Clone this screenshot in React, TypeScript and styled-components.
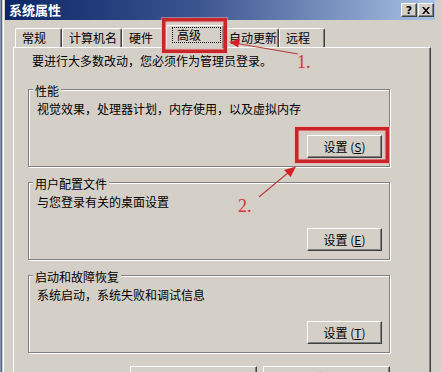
import React from "react";
import styled, { createGlobalStyle } from "styled-components";

const FONT = `"Noto Sans CJK SC", "Noto Sans", "DejaVu Sans", sans-serif`;
const FACE = "#d4d0c8";

const Global = createGlobalStyle`
  html, body { margin: 0; padding: 0; background: ${FACE}; }
  body { font-family: ${FONT}; font-size: 12px; color: #000; }
`;

const Window = styled.div`
  position: relative;
  width: 441px;
  height: 372px;
  overflow: hidden;
  box-sizing: border-box;
  background: ${FACE};
  padding: 0 6px 0 5px;
  display: flex;
  flex-direction: column;
  box-shadow: inset 1px 0 #8393b3, inset 2px 0 #52627f, inset 3px 0 ${FACE},
    inset 4px 0 #ffffff;
`;

const TitleBar = styled.div`
  height: 20px;
  flex: none;
  display: flex;
  align-items: center;
  padding: 0 1px 0 4px;
  box-sizing: border-box;
  background: linear-gradient(to right, #0c2668 0%, #3b5590 45%, #a9c2e4 100%);
`;

const TitleText = styled.span`
  flex: 1;
  color: #fff;
  font-family: ${FONT};
  font-weight: 700;
  font-size: 13px;
  line-height: 16px;
`;

const TitleButtons = styled.div`
  display: flex;
  gap: 1px;
`;

const CaptionButton = styled.div`
  width: 16px;
  height: 14px;
  box-sizing: border-box;
  background: ${FACE};
  border-top: 1px solid #fff;
  border-left: 1px solid #fff;
  border-right: 1px solid #404040;
  border-bottom: 1px solid #404040;
  box-shadow: inset -1px -1px #808080;
  display: flex;
  align-items: center;
  justify-content: center;
  font-family: "DejaVu Sans", sans-serif;
  font-weight: 700;
  font-size: 11px;
  line-height: 11px;
  color: #000;
`;

const Content = styled.div`
  flex: 1;
  display: flex;
  flex-direction: column;
  padding: 5px 4px 0 8px;
  min-height: 0;
`;

const TabStrip = styled.div`
  height: 23px;
  flex: none;
  display: flex;
  align-items: flex-end;
  padding-left: 2px;
  margin-bottom: -1px;
  position: relative;
  z-index: 1;
`;

const Tab = styled.div<{ $w: number; $active?: boolean }>`
  width: ${(p) => p.$w}px;
  height: ${(p) => (p.$active ? 23 : 19)}px;
  margin: ${(p) => (p.$active ? "0 -2px 0 -2px" : "0 0 1px 0")};
  position: relative;
  z-index: ${(p) => (p.$active ? 2 : 1)};
  box-sizing: border-box;
  background: ${FACE};
  border-top: 1px solid #fff;
  border-left: 1px solid #fff;
  border-right: 1px solid #404040;
  border-radius: 2px 2px 0 0;
  box-shadow: inset -1px 0 #808080;
  padding: ${(p) => (p.$active ? "1px 2px 0 5px" : "2px 0 0 6px")};
  font-size: 12px;
  line-height: 14px;
  white-space: nowrap;
`;

const FocusRect = styled.span`
  display: block;
  height: 16px;
  box-sizing: border-box;
  border: 1px dotted #000;
  padding: 0 0 0 4px;
  line-height: 14px;
`;

const Panel = styled.div`
  flex: 1;
  box-sizing: border-box;
  border-top: 1px solid #fff;
  border-left: 1px solid #fff;
  border-right: 1px solid #404040;
  border-bottom: 1px solid #404040;
  box-shadow: inset -1px -1px #808080;
  padding: 6px 0 0 14px;
  display: flex;
  flex-direction: column;
  gap: 15px;
`;

const Notice = styled.p`
  margin: 0 0 6px 4px;
  font-size: 12px;
  line-height: 14px;
`;

const Group = styled.div`
  position: relative;
  width: 362px;
  height: 78px;
  flex: none;
  box-sizing: border-box;
  border: 1px solid #808080;
  box-shadow: inset 1px 1px #fff, 1px 1px #fff;
  padding: 12px 7px 8px 8px;
  display: flex;
  flex-direction: column;
`;

const GroupTitle = styled.span`
  position: absolute;
  top: -6px;
  left: 4px;
  padding: 0 2px;
  background: ${FACE};
  font-size: 12px;
  line-height: 14px;
`;

const GroupText = styled.div`
  font-size: 12px;
  line-height: 14px;
`;

const Button = styled.div<{ $w?: number }>`
  width: ${(p) => p.$w ?? 75}px;
  height: 23px;
  box-sizing: border-box;
  background: ${FACE};
  border-top: 1px solid #fff;
  border-left: 1px solid #fff;
  border-right: 1px solid #404040;
  border-bottom: 1px solid #404040;
  box-shadow: inset -1px -1px #808080;
  display: flex;
  align-items: center;
  justify-content: center;
  font-size: 12px;
  line-height: 14px;
  white-space: nowrap;
`;

const GroupButton = styled(Button)`
  margin-top: auto;
  align-self: flex-end;
`;

const BottomRow = styled.div`
  width: 362px;
  display: flex;
  justify-content: flex-end;
  gap: 6px;
  margin-top: -2px;
`;

const Overlay = styled.div`
  position: absolute;
  inset: 0;
  pointer-events: none;
  z-index: 10;
`;

const Mark = styled.span<{ $x: number; $y: number }>`
  position: absolute;
  left: ${(p) => p.$x}px;
  top: ${(p) => p.$y}px;
  font-family: "Liberation Serif", serif;
  font-size: 18px;
  line-height: 18px;
  color: #c93a3a;
  text-shadow: 0 0 2px #f7b5b5;
`;

const Key = ({ k }: { k: string }) => (
  <>
    {" "}(<u>{k}</u>)
  </>
);

const tabs = [
  { label: "常规", w: 47 },
  { label: "计算机名", w: 60 },
  { label: "硬件", w: 46 },
  { label: "高级", w: 58, active: true },
  { label: "自动更新", w: 57 },
  { label: "远程", w: 46 },
];

const groups = [
  { title: "性能", text: "视觉效果，处理器计划，内存使用，以及虚拟内存", key: "S" },
  { title: "用户配置文件", text: "与您登录有关的桌面设置", key: "E" },
  { title: "启动和故障恢复", text: "系统启动，系统失败和调试信息", key: "T" },
];

export default function App() {
  return (
    <>
      <Global />
      <Window>
        <TitleBar>
          <TitleText>系统属性</TitleText>
          <TitleButtons>
            <CaptionButton>?</CaptionButton>
            <CaptionButton>
              <svg width="8" height="7" viewBox="0 0 8 7">
                <path d="M0 0h2l2 2.5L6 0h2L5 3.5 8 7H6L4 4.5 2 7H0l3-3.5z" fill="#000" />
              </svg>
            </CaptionButton>
          </TitleButtons>
        </TitleBar>
        <Content>
          <TabStrip>
            {tabs.map((t) => (
              <Tab key={t.label} $w={t.w} $active={t.active}>
                {t.active ? <FocusRect>{t.label}</FocusRect> : t.label}
              </Tab>
            ))}
          </TabStrip>
          <Panel>
            <Notice>要进行大多数改动，您必须作为管理员登录。</Notice>
            {groups.map((g) => (
              <Group key={g.title}>
                <GroupTitle>{g.title}</GroupTitle>
                <GroupText>{g.text}</GroupText>
                <GroupButton>
                  设置
                  <Key k={g.key} />
                </GroupButton>
              </Group>
            ))}
            <BottomRow>
              <Button $w={127}>
                环境变量<Key k="N" />
              </Button>
              <Button $w={127}>
                错误报告<Key k="R" />
              </Button>
            </BottomRow>
          </Panel>
        </Content>
        <Overlay>
          <svg width="441" height="372" viewBox="0 0 441 372">
            <g fill="none" stroke="#f3a7a7" strokeWidth="5.5" opacity="0.55">
              <rect x="163.75" y="19.75" width="61.5" height="31.5" />
              <rect x="296.75" y="128.75" width="90.5" height="32.5" />
            </g>
            <g fill="none" stroke="#c8262b" strokeWidth="3.5">
              <rect x="163.75" y="19.75" width="61.5" height="31.5" />
              <rect x="296.75" y="128.75" width="90.5" height="32.5" />
            </g>
            <g stroke="#b83a3a" strokeWidth="1.1">
              <line x1="298" y1="54" x2="237" y2="43.5" />
              <line x1="259" y1="197" x2="289" y2="172" />
            </g>
            <g fill="#d81f26">
              <polygon points="229,42 239.5,38.8 238.2,47.6" />
              <polygon points="296,166.5 290.6,177 284.2,170" />
            </g>
          </svg>
          <Mark $x={297} $y={53}>1.</Mark>
          <Mark $x={238} $y={197}>2.</Mark>
        </Overlay>
      </Window>
    </>
  );
}
